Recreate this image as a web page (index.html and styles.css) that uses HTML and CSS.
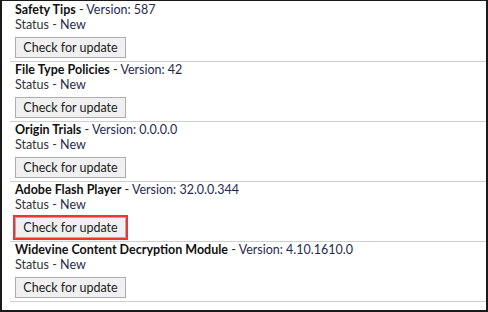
FILE: index.html
```html
<!DOCTYPE html>
<html lang="en">
<head>
  <meta charset="UTF-8">
  <meta name="viewport" content="width=device-width, initial-scale=1.0">
  <title>Components</title>
  <link rel="stylesheet" href="styles.css">
</head>
<body>
  <div class="frame">
    <div class="component">
      <div class="title"><span class="name">Safety Tips</span> - <span class="version">Version: 587</span></div>
      <div class="status">Status - <span class="state">New</span></div>
      <button class="check">Check for update</button>
    </div>
    <div class="component">
      <div class="title"><span class="name">File Type Policies</span> - <span class="version">Version: 42</span></div>
      <div class="status">Status - <span class="state">New</span></div>
      <button class="check">Check for update</button>
    </div>
    <div class="component">
      <div class="title"><span class="name">Origin Trials</span> - <span class="version">Version: 0.0.0.0</span></div>
      <div class="status">Status - <span class="state">New</span></div>
      <button class="check">Check for update</button>
    </div>
    <div class="component">
      <div class="title"><span class="name">Adobe Flash Player</span> - <span class="version">Version: 32.0.0.344</span></div>
      <div class="status">Status - <span class="state">New</span></div>
      <button class="check highlighted">Check for update</button>
    </div>
    <div class="component">
      <div class="title"><span class="name">Widevine Content Decryption Module</span> - <span class="version">Version: 4.10.1610.0</span></div>
      <div class="status">Status - <span class="state">New</span></div>
      <button class="check">Check for update</button>
    </div>
  </div>
</body>
</html>
```

FILE: styles.css
```css
/* Page frame */
body {
  margin: 0;
  font-family: Lato, 'Open Sans', sans-serif;
  font-size: 12.5px;
  color: #222;
  background: #fff;
}

.frame {
  box-sizing: border-box;
  width: 488px;
  height: 312px;
  border: 2px solid #1a1a1a;
  border-top-width: 1px;
  padding: 0 0 0 8px;
  overflow: hidden;
}

/* Component rows */
.component {
  padding: 1px 0 3px 5px;
  border-bottom: 1px solid #cfcfcf;
}

.component + .component {
  padding-top: 0;
}

.title, .status {
  line-height: 15px;
  height: 15px;
  white-space: nowrap;
}

.name {
  font-weight: 700;
  color: #111;
}

.version, .state {
  color: #1f2a4d;
}

.status {
  color: #333;
}

/* Button */
.check {
  display: block;
  margin-top: 5px;
  height: 21px;
  width: 111px;
  padding: 0;
  font-family: inherit;
  font-size: 12.5px;
  color: #222;
  background: #f0f0f0;
  border: 1px solid #adadad;
  border-radius: 0;
}

.highlighted {
  outline: 2px solid #e8363c;
  outline-offset: 0;
}
```
